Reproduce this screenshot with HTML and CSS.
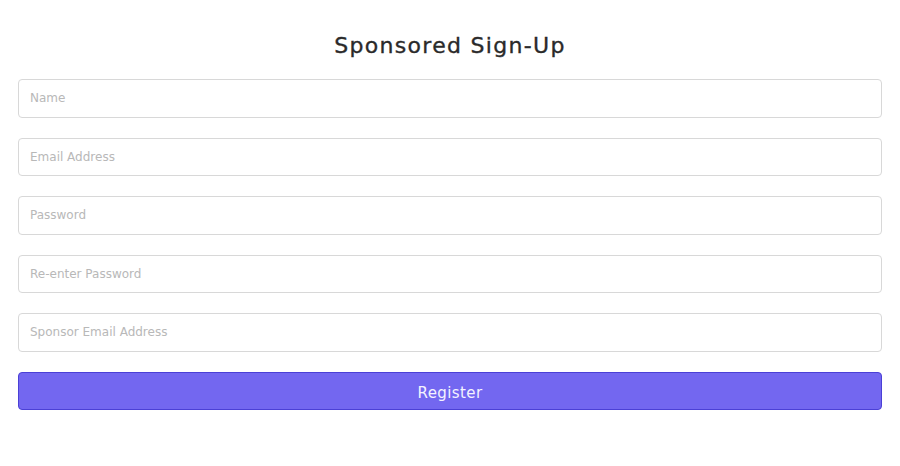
FILE: index.html
```html
<!DOCTYPE html>
<html lang="en">
<head>
<meta charset="utf-8">
<title>Sponsored Sign-Up</title>
<link rel="stylesheet" href="styles.css">
</head>
<body>
<main class="page">
  <h2 class="title">Sponsored Sign-Up</h2>
  <form class="form">
    <input class="field" type="text" placeholder="Name">
    <input class="field" type="email" placeholder="Email Address">
    <input class="field" type="password" placeholder="Password">
    <input class="field" type="password" placeholder="Re-enter Password">
    <input class="field" type="email" placeholder="Sponsor Email Address">
    <button class="btn" type="button">Register</button>
  </form>
</main>
</body>
</html>
```

FILE: styles.css
```css
html, body {
  margin: 0;
  padding: 0;
  background: #ffffff;
}
body {
  font-family: "DejaVu Sans", "Noto Sans", sans-serif;
}
.page {
  padding: 31px 18px 0 18px;
}
.title {
  margin: 0 0 19px 0;
  text-align: center;
  font-size: 22px;
  line-height: 29px;
  font-weight: 500;
  color: #2a2a2a;
  letter-spacing: 1.3px;
  -webkit-text-stroke: 0.35px #2a2a2a;
}
.form {
  display: flex;
  flex-direction: column;
  gap: 20px;
}
.field {
  box-sizing: border-box;
  height: 38.5px;
  width: 100%;
  margin: 0;
  padding: 0 11px;
  border: 1px solid #d8d8d8;
  border-radius: 4px;
  font-family: inherit;
  font-size: 12px;
  color: #444;
  background: #fff;
  outline: none;
}
.field::placeholder {
  color: #b8b8b8;
}
.btn {
  box-sizing: border-box;
  height: 38.5px;
  width: 100%;
  margin: 0;
  padding: 5px 0 0 0;
  border: 1px solid #4b40d6;
  border-radius: 4px;
  background: #7367f0;
  color: #f4f3ff;
  font-family: inherit;
  font-size: 15px;
  letter-spacing: 0.4px;
  cursor: pointer;
}
```
